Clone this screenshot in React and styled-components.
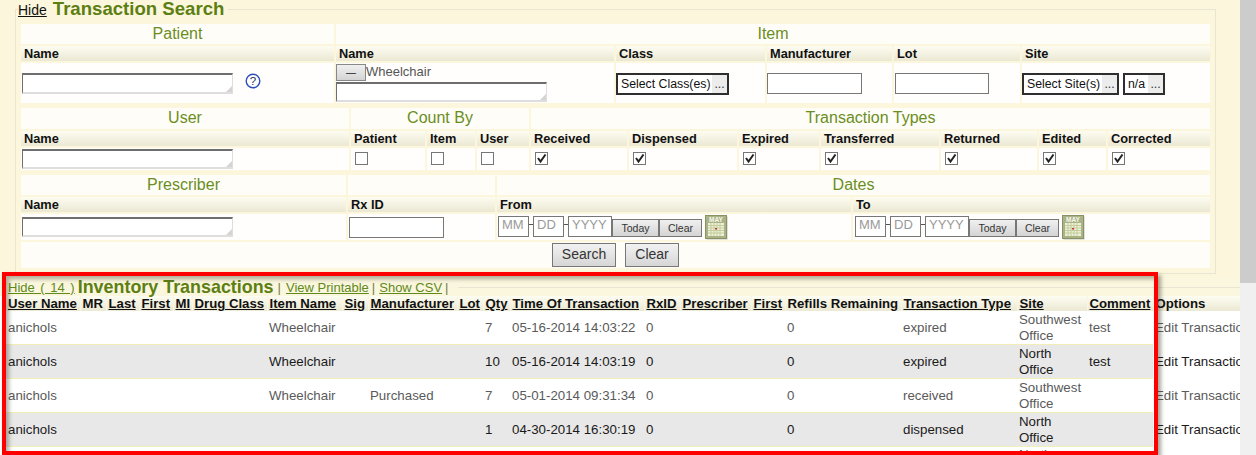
import React from "react";
import styled, { createGlobalStyle } from "styled-components";

const GlobalStyle = createGlobalStyle`
  html, body {
    margin: 0;
    padding: 0;
    height: 455px;
    overflow: hidden;
    background: #fff;
    font-family: "Liberation Sans", Arial, sans-serif;
  }
`;

const Page = styled.div`
  position: relative;
  display: flex;
  width: 1256px;
  height: 455px;
  overflow: hidden;
`;

const Main = styled.div`
  width: 1240px;
  flex: none;
  overflow: hidden;
  background: #fff;
`;

const Gutter = styled.div`
  flex: 1;
  display: flex;
  flex-direction: column;
  background: #f0f0f0;
`;

const GutterThumb = styled.div`
  height: 283px;
  background: #cccccc;
`;

const Upper = styled.div`
  height: 278px;
  background: #fcf6dc;
  padding-left: 15px;
  box-sizing: border-box;
`;

const SearchSet = styled.fieldset`
  width: 1200px;
  height: 274px;
  margin: 0;
  padding: 6px 5px 0;
  box-sizing: border-box;
  border: 1px solid #e8e6d2;
  display: flex;
  flex-direction: column;
  gap: 5px;
`;

const Legend = styled.legend`
  margin-left: -3px;
  padding: 0 4px 0 0;
  height: 18px;
  line-height: 17px;
  white-space: nowrap;
`;

const HideLink = styled.a`
  font-size: 14px;
  color: #111;
  text-decoration: underline;
  margin-right: 6px;
`;

const BigTitle = styled.span`
  font-size: 18.6px;
  font-weight: bold;
  color: #5c7f13;
`;

const FormGrid = styled.div`
  display: grid;
  grid-template-columns: ${({ $cols }) => $cols};
  grid-template-rows: ${({ $rows }) => $rows};
  gap: 2px;
`;

const GroupTitle = styled.div`
  grid-column: span ${({ $span }) => $span || 1};
  background: #fffdf8;
  color: #6b8e23;
  font-size: 16px;
  line-height: 20px;
  text-align: center;
`;

const ColHead = styled.div`
  background: linear-gradient(#fdfcf1, #ebe8d3);
  color: #111;
  font-size: 12.8px;
  font-weight: bold;
  line-height: 15px;
  padding-left: 3px;
  white-space: nowrap;
`;

const Cell = styled.div`
  background: #fffefc;
  display: flex;
  align-items: ${({ $top }) => ($top ? "flex-start" : "center")};
  flex-direction: ${({ $stack }) => ($stack ? "column" : "row")};
  padding-left: ${({ $pad }) => $pad ?? 1}px;
  min-width: 0;
`;

const TextBox = styled.div`
  position: relative;
  width: ${({ $w }) => $w || 211}px;
  height: ${({ $h }) => $h || 21}px;
  box-sizing: border-box;
  background: #fff;
  border-style: solid;
  border-width: 2px 1px 2px 1px;
  border-color: #6e6e6e #dedede #dedede #6e6e6e;
  &::after {
    content: "";
    position: absolute;
    right: 0;
    bottom: 0;
    border-style: solid;
    border-width: 0 0 6px 6px;
    border-color: transparent transparent #d4d4d4 transparent;
  }
`;

const PlainInput = styled.div`
  width: ${({ $w }) => $w}px;
  height: 21px;
  box-sizing: border-box;
  background: #fff;
  border: 1px solid #777;
  color: #9a9a9a;
  font-size: 13.5px;
  line-height: 15px;
  padding-left: 3px;
  white-space: nowrap;
  margin-right: ${({ $gap }) => $gap || 0}px;
`;

const HelpIcon = styled.svg`
  width: 16px;
  height: 16px;
  margin-left: 12px;
  margin-top: -4px;
`;

const ItemLine = styled.div`
  display: flex;
  align-items: flex-start;
  height: 19px;
  font-size: 13px;
  color: #555;
  line-height: 17px;
`;

const MinusButton = styled.div`
  width: 30px;
  height: 17px;
  margin-top: 1px;
  box-sizing: border-box;
  border: 1px solid #888;
  background: linear-gradient(#f0f0f0, #d4d4d4);
  color: #222;
  font-size: 10px;
  line-height: 15px;
  text-align: center;
`;

const Picker = styled.div`
  display: flex;
  align-items: stretch;
  width: ${({ $w }) => $w}px;
  height: 22px;
  margin-top: 2px;
  box-sizing: border-box;
  border: 2px solid #2e2e2e;
  background: #fff;
  margin-right: ${({ $gap }) => $gap || 0}px;
  color: #111;
  font-size: 12.3px;
  line-height: 18px;
  white-space: nowrap;
`;

const PickerLabel = styled.span`
  flex: 1;
  padding-left: 3px;
  overflow: hidden;
`;

const PickerDots = styled.span`
  width: 15px;
  background: #ececec;
  color: #333;
  text-align: center;
`;

const CheckCell = styled(Cell)`
  padding-left: 4px;
  padding-bottom: 2px;
`;

const Box = styled.span`
  display: inline-flex;
  width: 13px;
  height: 13px;
  box-sizing: border-box;
  background: #fff;
  border: 1px solid #767676;
`;

const Dash = styled.span`
  width: 4px;
  height: 1px;
  margin-top: 8px;
  background: #555;
`;

const DateRow = styled.div`
  display: flex;
  align-items: flex-start;
  height: 26px;
  padding-top: 2px;
  box-sizing: border-box;
`;

const DateField = styled(PlainInput)`
  font-size: 13px;
`;

const MiniButton = styled.div`
  width: ${({ $w }) => $w}px;
  height: 18px;
  margin-top: 3px;
  box-sizing: border-box;
  border: 1px solid #777;
  background: linear-gradient(#f0f0f0, #d4d4d4);
  color: #333;
  font-size: 10.5px;
  line-height: 16px;
  text-align: center;
`;

const CalendarIcon = styled.svg`
  width: 23px;
  height: 25px;
  margin-left: 3px;
  margin-top: -1px;
`;

const ButtonRow = styled.div`
  height: 26px;
  margin-top: -3px;
  background: #fffdf8;
  display: flex;
  justify-content: center;
  align-items: center;
  gap: 9px;
`;

const ActionButton = styled.div`
  width: ${({ $w }) => $w}px;
  height: 24px;
  box-sizing: border-box;
  border: 1px solid #777;
  background: linear-gradient(#f2f2f2, #d6d6d6);
  color: #333;
  font-size: 14px;
  line-height: 21px;
  text-align: center;
`;

const Results = styled.div`
  position: relative;
  background: #fff;
`;

const ResultsBar = styled.div`
  display: flex;
  align-items: center;
  height: 18px;
  padding-left: 8px;
  background: #fbf6de;
  white-space: nowrap;
`;

const ResultLink = styled.a`
  color: #5f8a1c;
  font-size: 13px;
  text-decoration: underline;
  word-spacing: ${({ $loose }) => ($loose ? "2px" : "0")};
`;

const BarTitle = styled(BigTitle)`
  margin: 0 4px 0 3px;
  font-size: 17.9px;
`;

const BarSep = styled.span`
  color: #6f7f4a;
  font-size: 13px;
  margin: 0 ${({ $r }) => $r ?? 4}px 0 ${({ $l }) => $l ?? 3}px;
`;

const BarRule = styled.span`
  flex: 1;
  height: 1px;
  margin-left: 5px;
  background: #e8e6d2;
`;

const Table = styled.table`
  table-layout: fixed;
  width: 1247px;
  margin-left: 6px;
  border-collapse: collapse;
  font-size: 13.3px;
`;

const Th = styled.th`
  height: 15px;
  padding: 0 0 0 2px;
  text-align: left;
  font-size: 13.2px;
  line-height: 15px;
  color: #111;
  white-space: nowrap;
  background: linear-gradient(#fdfcf1, #ebe8d3);
  border-right: 1px solid #f8f5e2;
  text-decoration: ${({ $plain }) => ($plain ? "none" : "underline")};
`;

const Tr = styled.tr`
  color: ${({ $even }) => ($even ? "#1a1a1a" : "#5a5a5a")};
  background: ${({ $even }) => ($even ? "#e8e8e8" : "#fff")};
`;

const Td = styled.td`
  height: 33px;
  padding: 0 2px;
  line-height: 15.5px;
  border-bottom: 1px solid #f1eeb8;
  overflow: hidden;
  vertical-align: ${({ $top }) => ($top ? "top" : "middle")};
  white-space: ${({ $wrap }) => ($wrap ? "normal" : "nowrap")};
`;

const OptionTd = styled(Td)`
  background: #fff;
  border-bottom: none;
`;

const RedFrame = styled.div`
  position: absolute;
  left: 2px;
  top: 272px;
  width: 1156px;
  height: 183px;
  box-sizing: border-box;
  border: 4px solid #ff0000;
  box-shadow: 3px 3px 4px rgba(60, 60, 40, 0.45), inset 3px 3px 4px rgba(60, 60, 40, 0.4);
`;

const Check = () => (
  <svg width="11" height="11" viewBox="0 0 11 11">
    <path d="M2 5 L4.5 8.5 L9.5 1.5" fill="none" stroke="#222" strokeWidth="2" />
  </svg>
);

const CheckBox = ({ checked }) => (
  <CheckCell>
    <Box>{checked && <Check />}</Box>
  </CheckCell>
);

const Help = () => (
  <HelpIcon viewBox="0 0 16 16">
    <circle cx="8" cy="8" r="6.8" fill="#fff" stroke="#2f4db8" strokeWidth="1.4" />
    <text x="8" y="12" textAnchor="middle" fontSize="11.5" fill="#262c55" fontFamily="Liberation Sans">?</text>
  </HelpIcon>
);

const Calendar = () => (
  <CalendarIcon viewBox="0 0 23 25">
    <rect x="1.5" y="1.5" width="21" height="23" fill="#8a8a70" opacity="0.5" />
    <rect x="0.5" y="0.5" width="21" height="23" fill="#aab287" stroke="#8a9264" />
    <text x="11" y="6.5" textAnchor="middle" fontSize="6.5" fontWeight="bold" fill="#f6f6ea" fontFamily="Liberation Sans">MAY</text>
    <rect x="3" y="8" width="16" height="13" fill="#eef0d8" />
    <path d="M3 10.5H19M3 13H19M3 15.5H19M3 18H19M6 8V21M9 8V21M12 8V21M15 8V21" stroke="#c4cc9c" strokeWidth="1" />
    <rect x="10" y="13" width="2" height="1.5" fill="#c8323c" />
  </CalendarIcon>
);

const DateGroup = () => (
  <DateRow>
    <DateField $w={31}>MM</DateField>
    <Dash />
    <DateField $w={31}>DD</DateField>
    <Dash />
    <DateField $w={44}>YYYY</DateField>
    <MiniButton $w={47}>Today</MiniButton>
    <MiniButton $w={43}>Clear</MiniButton>
    <Calendar />
  </DateRow>
);

const widths = [74, 26, 33, 34, 19, 75, 75, 26, 89, 26, 27, 134, 36, 71, 34, 116, 116, 70, 66, 100];

const headers = [
  ["User Name"], ["MR", true], ["Last"], ["First"], ["MI"], ["Drug Class"], ["Item Name"], ["Sig"],
  ["Manufacturer"], ["Lot"], ["Qty"], ["Time Of Transaction"], ["RxID"], ["Prescriber"], ["First"],
  ["Refills Remaining", true], ["Transaction Type"], ["Site"], ["Comment"], ["Options", true],
];

const rows = [
  { item: "Wheelchair", maker: "", qty: 7, time: "05-16-2014 14:03:22", type: "expired", site: "Southwest Office", note: "test" },
  { item: "Wheelchair", maker: "", qty: 10, time: "05-16-2014 14:03:19", type: "expired", site: "North Office", note: "test" },
  { item: "Wheelchair", maker: "Purchased", qty: 7, time: "05-01-2014 09:31:34", type: "received", site: "Southwest Office", note: "" },
  { item: "", maker: "", qty: 1, time: "04-30-2014 16:30:19", type: "dispensed", site: "North Office", note: "" },
  { item: "", maker: "", qty: 1, time: "04-30-2014 16:28:02", type: "dispensed", site: "North Office", note: "", cut: true },
];

export default function App() {
  return (
    <Page>
      <GlobalStyle />
      <Main>
        <Upper>
          <SearchSet>
            <Legend>
              <HideLink>Hide</HideLink>
              <BigTitle>Transaction Search</BigTitle>
            </Legend>

            <FormGrid $cols="313px 278px 149px 125px 126px 188px" $rows="20px 15px 40px">
              <GroupTitle>Patient</GroupTitle>
              <GroupTitle $span={5}>Item</GroupTitle>
              <ColHead>Name</ColHead>
              <ColHead>Name</ColHead>
              <ColHead>Class</ColHead>
              <ColHead>Manufacturer</ColHead>
              <ColHead>Lot</ColHead>
              <ColHead>Site</ColHead>
              <Cell>
                <TextBox />
                <Help />
              </Cell>
              <Cell $stack $top $pad={0}>
                <ItemLine>
                  <MinusButton>—</MinusButton>
                  Wheelchair
                </ItemLine>
                <TextBox $h={20} />
              </Cell>
              <Cell $pad={0}>
                <Picker $w={113}>
                  <PickerLabel>Select Class(es)</PickerLabel>
                  <PickerDots>...</PickerDots>
                </Picker>
              </Cell>
              <Cell $pad={0}>
                <PlainInput $w={95} />
              </Cell>
              <Cell>
                <PlainInput $w={94} />
              </Cell>
              <Cell $pad={0}>
                <Picker $w={97} $gap={4}>
                  <PickerLabel>Select Site(s)</PickerLabel>
                  <PickerDots>...</PickerDots>
                </Picker>
                <Picker $w={42}>
                  <PickerLabel>n/a</PickerLabel>
                  <PickerDots>...</PickerDots>
                </Picker>
              </Cell>
            </FormGrid>

            <FormGrid $cols="328px 74px 48px 52px 96px 108px 80px 118px 96px 67px 102px" $rows="21px 15px 22px">
              <GroupTitle>User</GroupTitle>
              <GroupTitle $span={3}>Count By</GroupTitle>
              <GroupTitle $span={7}>Transaction Types</GroupTitle>
              <ColHead>Name</ColHead>
              {["Patient", "Item", "User", "Received", "Dispensed", "Expired", "Transferred", "Returned", "Edited", "Corrected"].map((name) => (
                <ColHead key={name}>{name}</ColHead>
              ))}
              <Cell>
                <TextBox $h={20} />
              </Cell>
              {[0, 0, 0, 1, 1, 1, 1, 1, 1, 1].map((on, i) => (
                <CheckBox key={i} checked={!!on} />
              ))}
            </FormGrid>

            <FormGrid $cols="325px 147px 354px 357px" $rows="20px 15px 26px">
              <GroupTitle>Prescriber</GroupTitle>
              <GroupTitle />
              <GroupTitle $span={2}>Dates</GroupTitle>
              <ColHead>Name</ColHead>
              <ColHead>Rx ID</ColHead>
              <ColHead>From</ColHead>
              <ColHead>To</ColHead>
              <Cell>
                <TextBox $h={20} />
              </Cell>
              <Cell>
                <PlainInput $w={95} />
              </Cell>
              <Cell $pad={1}>
                <DateGroup />
              </Cell>
              <Cell $pad={2}>
                <DateGroup />
              </Cell>
            </FormGrid>

            <ButtonRow>
              <ActionButton $w={64}>Search</ActionButton>
              <ActionButton $w={54}>Clear</ActionButton>
            </ButtonRow>
          </SearchSet>
        </Upper>

        <Results>
          <ResultsBar>
            <ResultLink $loose>Hide ( 14 )</ResultLink>
            <BarTitle>Inventory Transactions</BarTitle>
            <BarSep $l={0} $r={5}>|</BarSep>
            <ResultLink>View Printable</ResultLink>
            <BarSep>|</BarSep>
            <ResultLink>Show CSV</ResultLink>
            <BarSep>|</BarSep>
            <BarRule />
          </ResultsBar>
          <Table>
            <colgroup>
              {widths.map((w, i) => (
                <col key={i} style={{ width: w }} />
              ))}
            </colgroup>
            <thead>
              <tr>
                {headers.map(([label, plain], i) => (
                  <Th key={i} $plain={plain}>{label}</Th>
                ))}
              </tr>
            </thead>
            <tbody>
              {rows.map((row, i) => (
                <Tr key={i} $even={i % 2 === 1}>
                  <Td>anichols</Td>
                  <Td colSpan={5} />
                  <Td>{row.item}</Td>
                  <Td />
                  <Td>{row.maker}</Td>
                  <Td />
                  <Td>{row.qty}</Td>
                  <Td>{row.time}</Td>
                  <Td>0</Td>
                  <Td colSpan={2} />
                  <Td>0</Td>
                  <Td>{row.type}</Td>
                  <Td $wrap $top={row.cut}>{row.site}</Td>
                  <Td>{row.note}</Td>
                  <OptionTd>Edit Transaction</OptionTd>
                </Tr>
              ))}
            </tbody>
          </Table>
        </Results>
      </Main>
      <Gutter>
        <GutterThumb />
      </Gutter>
      <RedFrame />
    </Page>
  );
}
